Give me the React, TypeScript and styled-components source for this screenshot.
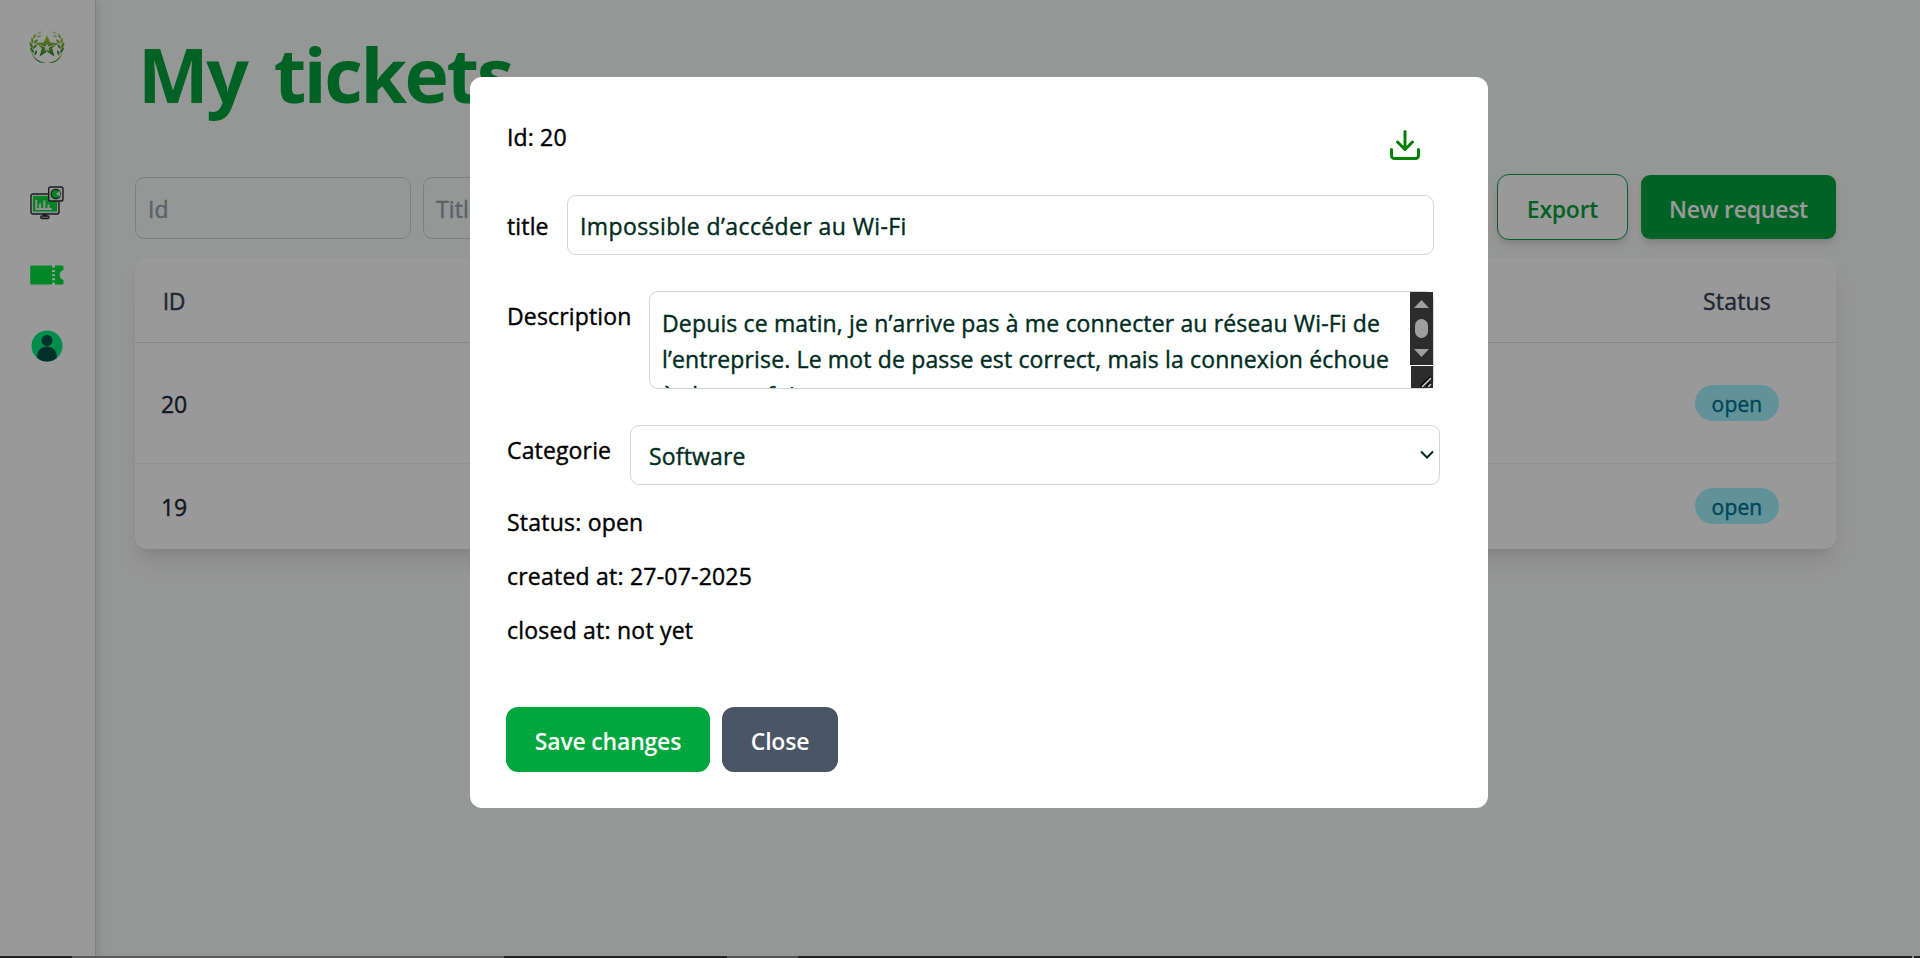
import React from "react";
import styled, { createGlobalStyle } from "styled-components";

const GlobalStyle = createGlobalStyle`
  *, *::before, *::after { box-sizing: border-box; }
  body {
    margin: 0;
    overflow: hidden;
    background: #f9fafb;
    font-family: "Open Sans", "Noto Sans", sans-serif;
    font-size: 23px;
    font-weight: 500;
    line-height: 36px;
    letter-spacing: 0.15px;
    -webkit-text-stroke: 0.4px currentColor;
    color: #000;
  }
  input, select, textarea, button { font: inherit; letter-spacing: inherit; margin: 0; }
  p, h1 { margin: 0; }
`;

const Page = styled.div`
  display: flex;
  height: 958px;
  position: relative;
`;

const Sidebar = styled.nav`
  width: 96px;
  flex: none;
  background: #fff;
  border-right: 1px solid #d1d5db;
  box-shadow: 2px 0 8px rgba(0, 0, 0, 0.1);
  display: flex;
  flex-direction: column;
  align-items: center;
  padding-top: 29px;
  padding-right: 1px;
  svg { display: block; flex: none; }
`;

const NavItems = styled.div`
  display: flex;
  flex-direction: column;
  align-items: center;
  gap: 37px;
  margin-top: 121px;
`;

const TicketNav = styled.div`
  display: flex;
  align-items: center;
  height: 36px;
`;

const Main = styled.main`
  flex: 1;
  padding: 22px 84px 0 39px;
`;

const Heading = styled.h1`
  height: 105px;
  padding-left: 3px;
  font-size: 75px;
  font-weight: 700;
  line-height: 105px;
  letter-spacing: -2.4px;
  word-spacing: 10px;
  -webkit-text-stroke: 0;
  color: #00a63e;
`;

const Toolbar = styled.div`
  display: flex;
  align-items: center;
  height: 66px;
  margin-top: 47px;
  gap: 12px;
`;

const FilterInput = styled.input`
  width: 276px;
  height: 62px;
  margin-top: 2px;
  padding: 2px 12px 0;
  border: 1px solid #d1d5db;
  border-radius: 9px;
  background: transparent;
  &::placeholder { color: #99a1af; opacity: 1; }
`;

const Spacer = styled.div`
  flex: 1;
`;

const ToolButton = styled.button<{ $outline?: boolean }>`
  width: ${(p) => (p.$outline ? 131 : 195)}px;
  height: ${(p) => (p.$outline ? 66 : 64)}px;
  margin-right: ${(p) => (p.$outline ? 1 : 0)}px;
  padding: 4px 0 0;
  border: ${(p) => (p.$outline ? "1px solid #00a63e" : "0")};
  border-radius: ${(p) => (p.$outline ? 12 : 9)}px;
  background: ${(p) => (p.$outline ? "#fff" : "#00a63e")};
  color: ${(p) => (p.$outline ? "#00a63e" : "#fff")};
  font-weight: 600;
  letter-spacing: -0.25px;
  -webkit-text-stroke: 0;
  box-shadow: 0 6px 9px -1.5px rgba(0, 0, 0, 0.1), 0 3px 6px -3px rgba(0, 0, 0, 0.1);
`;

const Table = styled.div`
  margin-top: 18px;
  border-radius: 12px;
  background: #fff;
  box-shadow: 0 15px 22px -4px rgba(0, 0, 0, 0.1), 0 6px 9px -6px rgba(0, 0, 0, 0.1);
`;

const Row = styled.div<{ $height: number; $header?: boolean }>`
  display: flex;
  justify-content: space-between;
  align-items: center;
  height: ${(p) => p.$height}px;
  border-bottom: 1px solid ${(p) => (p.$header ? "#e0e2e6" : "#f0f1f3")};
  color: ${(p) => (p.$header ? "#364153" : "#1e2939")};
  &:last-child { border-bottom: 0; }
`;

const IdCell = styled.div`
  width: 78px;
  padding-top: 1px;
  text-align: center;
  letter-spacing: -0.2px;
`;

const StatusCell = styled.div<{ $header?: boolean }>`
  display: flex;
  justify-content: center;
  width: 198px;
  padding-top: ${(p) => (p.$header ? 1 : 0)}px;
`;

const Pill = styled.span`
  width: 84px;
  height: 36px;
  margin-top: -1px;
  padding-top: 1px;
  border-radius: 18px;
  background: #a2f4fd;
  color: #007595;
  font-size: 21px;
  text-align: center;
`;

const Overlay = styled.div`
  position: absolute;
  inset: 0;
  display: flex;
  justify-content: center;
  align-items: flex-start;
  padding: 77px 0 0 38px;
  background: rgba(0, 0, 0, 0.4);
`;

const Dialog = styled.section`
  width: 1018px;
  height: 731px;
  padding: 36px;
  border-radius: 12px;
  background: #fff;
`;

const DialogHeader = styled.div`
  display: flex;
  justify-content: space-between;
  height: 82px;
  padding: 6px 29px 0 1px;
  svg { margin-top: 8px; }
`;

const Field = styled.div<{ $height: number; $gap: number }>`
  display: flex;
  justify-content: space-between;
  height: ${(p) => p.$height}px;
  margin-bottom: ${(p) => p.$gap}px;
`;

const Label = styled.label<{ $top: number }>`
  padding-top: ${(p) => p.$top}px;
  padding-left: 1px;
  white-space: nowrap;
`;

const TitleInput = styled.input`
  width: 867px;
  height: 60px;
  margin-right: 18px;
  margin-left: auto;
  padding: 2px 12px 0;
  border: 1px solid #d1d5dc;
  border-radius: 9px;
  color: #002c22;
  letter-spacing: 0.4px;
`;

const AreaFrame = styled.div`
  display: flex;
  width: 785px;
  height: 98px;
  margin-right: 18px;
  border: 1px solid #d1d5dc;
  border-radius: 9px;
`;

const Area = styled.textarea`
  width: 760px;
  height: 96px;
  padding: 13px 0 0 12px;
  border: 0;
  resize: none;
  overflow: hidden;
  background: transparent;
  color: #002c22;
  white-space: pre;
`;

const SelectFrame = styled.div`
  display: flex;
  align-items: center;
  width: 810px;
  height: 60px;
  margin-right: 12px;
  padding-right: 5px;
  border: 1px solid #d1d5dc;
  border-radius: 9px;
`;

const Select = styled.select`
  flex: 1;
  height: 58px;
  padding: 2px 0 0 18px;
  border: 0;
  appearance: none;
  background: transparent;
  color: #002c22;
`;

const Details = styled.div`
  display: flex;
  flex-direction: column;
  gap: 18px;
  padding-left: 1px;
  letter-spacing: 0.22px;
`;

const Actions = styled.div`
  display: flex;
  gap: 12px;
  margin-top: 59px;
`;

const ActionButton = styled.button<{ $width: number; $color: string }>`
  width: ${(p) => p.$width}px;
  height: 65px;
  padding: 3px 0 0;
  border: 0;
  border-radius: 12px;
  background: ${(p) => p.$color};
  color: #fff;
  font-weight: 600;
  letter-spacing: -0.2px;
  -webkit-text-stroke: 0;
`;

const BottomEdge = styled.div`
  position: absolute;
  left: 0;
  right: 0;
  bottom: 0;
  height: 2px;
  background: linear-gradient(90deg, #252324 72px, #5b5859 72px 504px, #252324 504px 727px, #555253 727px 798px, #252324 798px 1912px, #8a8a8a 1912px 1914px, #252324 1914px);
`;

const Logo = () => (
  <svg width="36" height="36" viewBox="0 0 36 36" fill="none">
    <defs>
      <linearGradient id="leaf" x1="0" y1="0" x2="0" y2="1">
        <stop offset="0" stopColor="#b4d040" />
        <stop offset="0.6" stopColor="#62a52c" />
        <stop offset="1" stopColor="#218a3d" />
      </linearGradient>
    </defs>
    <path d="M18 6l3.300 7.500 7.900.5-6 5.200 2.300 8.300-7.500-4.800-7.500 4.800 2.300-8.300-6-5.200 7.900-.5z" fill="url(#leaf)" />
    <path d="M18 14.300l1 2.700 3 .2-2.300 1.900.8 3-2.500-1.700-2.500 1.700.8-3-2.300-1.900 3-.2z" fill="#f4f8ec" />
    <path d="M18 20.500v4.500M14.500 17.500l-4.500-2M21.500 17.500l4.500-2" stroke="#f4f8ec" strokeWidth="0.8" />
    <g id="branch" fill="url(#leaf)">
      <path d="M2 21c1.500 7 7.500 12 14.500 12.800C10 35.500 2.500 29 2 21z" />
      <path d="M.8 13c2.700 1.500 3.600 4 2.600 6.500C1.200 18 .2 15.500.8 13zM2.800 8.500c2 2 2.200 4.300.6 6.300-1.500-2-1.700-4.200-.6-6.300zM6.500 4.300c.9 2.400.2 4.300-2.200 5.700-.5-2.300.2-4.200 2.200-5.700zM9 10.200c-.2 2.600-1.600 4-4.200 4.300.1-2.400 1.500-4 4.200-4.300zM7.500 15c.4 2.600-.7 4.200-3.200 5-.5-2.400.5-4.200 3.200-5zM1 18.500c2.800.9 4.200 2.900 4 5.500C2.500 23.300 1 21.400 1 18.500zM7.600 21c.9 2 .3 3.800-1.700 5.500-1-2-.4-3.900 1.700-5.500z" />
      <path d="M8 5c1.300-1.700 3-2.600 5-2.700-1 1.800-2.700 2.700-5 2.700zM7.500 8c1.600-1.500 3.300-2 5.200-1.800-1.300 1.500-3 2.100-5.200 1.800z" opacity=".6" />
    </g>
    <use href="#branch" transform="translate(36 0) scale(-1 1)" />
  </svg>
);

const DashboardIcon = () => (
  <svg width="34" height="34" viewBox="0 0 34 34" fill="none">
    <rect x="1" y="8" width="28" height="20" rx="2" fill="#eee" stroke="#2e3038" strokeWidth="1.4" />
    <rect x="3" y="10" width="24" height="15.500" fill="#00dc3c" />
    <path d="M13.500 28h3v2h-3z" fill="#2e3038" stroke="#2e3038" />
    <rect x="10.700" y="30" width="8.300" height="2.500" rx="1.200" fill="#bbb" stroke="#2e3038" strokeWidth="1.300" />
    <path d="M6.300 14v9h15.500M10 22.500v-5M14.300 22.500v-8M18.500 22.500v-4" stroke="#eee" strokeWidth="2" />
    <rect x="18.700" y="1" width="14.300" height="14" rx="1.500" fill="#eee" stroke="#2e3038" strokeWidth="1.400" />
    <circle cx="25.800" cy="8" r="4.700" fill="#00dc3c" stroke="#2e3038" strokeWidth="1.200" />
    <path d="M25.800 8l4.500-3.300v6z" fill="#eee" />
  </svg>
);

const TicketIcon = () => (
  <svg width="34" height="20" viewBox="0 0 34 20" fill="#00e340">
    <path d="M1.500.5H22v19H1.500A1.300 1.300 0 0 1 .2 18.200V1.800A1.300 1.300 0 0 1 1.500.5z" />
    <path d="M25 .5h7.200a1.300 1.300 0 0 1 1.300 1.300V5a5.200 5.200 0 0 0 0 10v3.200a1.300 1.300 0 0 1-1.300 1.300H25z" />
    <path d="M22 2.500h3V5h-3zM22 7h3v2.300h-3zM22 11h3v2.300h-3zM22 15.300h3v2.300h-3z" />
  </svg>
);

const UserIcon = () => (
  <svg width="32" height="32" viewBox="0 0 32 32">
    <circle cx="16" cy="16" r="15.500" fill="#00ed80" />
    <circle cx="16" cy="10.500" r="5.500" fill="#005047" />
    <path d="M6.200 28v-2c0-5.500 4.300-9.500 9.800-9.500s9.800 4 9.800 9.500v2c-5.500 4.700-14 4.700-19.600 0z" fill="#005047" />
  </svg>
);

const DownloadIcon = () => (
  <svg width="36" height="36" viewBox="0 0 24 24" fill="none" stroke="#008000" strokeWidth="2" strokeLinecap="round" strokeLinejoin="round">
    <path d="M21 15v4a2 2 0 0 1-2 2H5a2 2 0 0 1-2-2v-4" />
    <path d="M7 10l5 5 5-5M12 15V3" />
  </svg>
);

const ChevronIcon = () => (
  <svg width="14" height="10" viewBox="0 0 14 10" fill="none" stroke="#002c22" strokeWidth="2">
    <path d="M1 1.500l6 6 6-6" />
  </svg>
);

const AreaScrollbar = () => (
  <svg width="23" height="96" viewBox="0 0 23 96">
    <path d="M0 0h23v73H0zM1 74h22v22H1z" fill="#2c2c2c" />
    <path d="M4 16h15l-7.500-8zM4 57h15l-7.500 8z" fill="#9f9f9f" />
    <rect x="5" y="27" width="13" height="19" rx="6.500" fill="#9f9f9f" />
    <path d="M11 95l10-10M17 95l4-4" stroke="#0c0c0c" strokeWidth="3.500" />
    <path d="M12 95l9-9M18 95l3-3" stroke="#d0d0d0" strokeWidth="1.500" />
  </svg>
);

const description =
  "Depuis ce matin, je n’arrive pas à me connecter au réseau Wi-Fi de\nl’entreprise. Le mot de passe est correct, mais la connexion échoue\nà chaque fois.";

const tickets = [
  { id: 20, status: "open", height: 121 },
  { id: 19, status: "open", height: 85 },
];

export default function App() {
  return (
    <Page>
      <GlobalStyle />
      <Sidebar>
        <Logo />
        <NavItems>
          <DashboardIcon />
          <TicketNav><TicketIcon /></TicketNav>
          <UserIcon />
        </NavItems>
      </Sidebar>
      <Main>
        <Heading>My tickets</Heading>
        <Toolbar>
          <FilterInput placeholder="Id" />
          <FilterInput placeholder="Title" />
          <Spacer />
          <ToolButton $outline>Export</ToolButton>
          <ToolButton>New request</ToolButton>
        </Toolbar>
        <Table>
          <Row $height={85} $header>
            <IdCell>ID</IdCell>
            <StatusCell $header>Status</StatusCell>
          </Row>
          {tickets.map((t) => (
            <Row key={t.id} $height={t.height}>
              <IdCell>{t.id}</IdCell>
              <StatusCell><Pill>{t.status}</Pill></StatusCell>
            </Row>
          ))}
        </Table>
      </Main>
      <Overlay>
        <Dialog>
          <DialogHeader>
            <p>Id: 20</p>
            <DownloadIcon />
          </DialogHeader>
          <Field $height={60} $gap={36}>
            <Label $top={13}>title</Label>
            <TitleInput defaultValue="Impossible d’accéder au Wi-Fi" />
          </Field>
          <Field $height={98} $gap={36}>
            <Label $top={7}>Description</Label>
            <AreaFrame>
              <Area defaultValue={description} />
              <AreaScrollbar />
            </AreaFrame>
          </Field>
          <Field $height={60} $gap={19}>
            <Label $top={7}>Categorie</Label>
            <SelectFrame>
              <Select defaultValue="Software"><option>Software</option></Select>
              <ChevronIcon />
            </SelectFrame>
          </Field>
          <Details>
            <p>Status: open</p>
            <p>created at: 27-07-2025</p>
            <p>closed at: not yet</p>
          </Details>
          <Actions>
            <ActionButton $width={204} $color="#00a63e">Save changes</ActionButton>
            <ActionButton $width={116} $color="#4a5565">Close</ActionButton>
          </Actions>
        </Dialog>
      </Overlay>
      <BottomEdge />
    </Page>
  );
}
